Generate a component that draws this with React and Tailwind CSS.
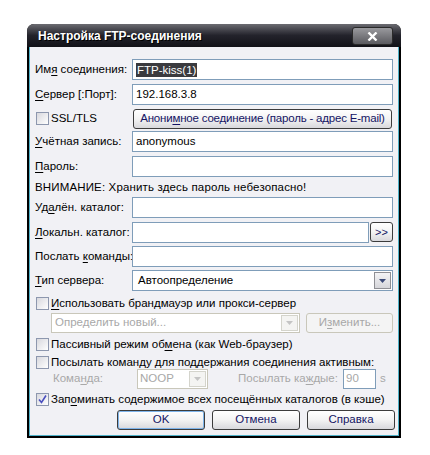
import React from 'react'

// Windows XP-style "FTP connection settings" dialog

const font = { fontFamily: '"Liberation Sans", Arial, sans-serif' }

function U({ children }) {
  return <span className="underline underline-offset-[2px]">{children}</span>
}

function Field({ children, className = '' }) {
  return (
    <div className={`h-[21px] bg-white border border-[#7f9db9] flex items-center px-[3px] ${className}`}>
      {children}
    </div>
  )
}

function Check({ checked = false }) {
  return (
    <div className="w-[13px] h-[13px] shrink-0 border border-[#8d97ae] bg-gradient-to-br from-[#d8d8de] to-white flex items-center justify-center">
      {checked && (
        <svg width="9" height="9" viewBox="0 0 9 9">
          <path d="M1 4.5 L3.5 7.5 L8 0.5" fill="none" stroke="#4a4fbf" strokeWidth="1.6" />
        </svg>
      )}
    </div>
  )
}

function Arrow({ disabled = false }) {
  return (
    <div
      className={`w-[17px] h-full shrink-0 flex items-center justify-center border ${
        disabled ? 'border-[#d4d4cc] bg-[#f4f4f2]' : 'border-[#8f8f94] bg-gradient-to-b from-[#f4f4f6] to-[#d6d6da]'
      }`}
    >
      <svg width="7" height="4" viewBox="0 0 7 4">
        <path d="M0 0 H7 L3.5 4 Z" fill={disabled ? '#c4c4c4' : '#3b4a78'} />
      </svg>
    </div>
  )
}

function Button({ children, className = '', def = false, disabled = false }) {
  return (
    <div
      className={`h-[20px] rounded-[3px] border flex items-center justify-center whitespace-nowrap ${
        disabled
          ? 'border-[#c9c7ba] text-[#a7a7a7] bg-[#f4f4f4]'
          : 'border-[#3c3c3c] text-[#141464] bg-gradient-to-b from-white via-[#f3f3f3] to-[#d8d8dc]'
      } ${def ? 'shadow-[inset_0_0_0_1px_#7fb4ea]' : ''} ${className}`}
    >
      {children}
    </div>
  )
}

function Row({ label, children, className = '' }) {
  return (
    <div className={`flex items-center h-[21px] ${className}`}>
      <div className="w-[97px] shrink-0 leading-none whitespace-nowrap">{label}</div>
      <div className="flex-1 flex h-full">{children}</div>
    </div>
  )
}

function CheckRow({ checked, children, className = '' }) {
  return (
    <div className={`flex items-center h-[15px] pl-[1px] gap-[2px] whitespace-nowrap ${className}`}>
      <Check checked={checked} />
      <span className="leading-none">{children}</span>
    </div>
  )
}

export default function App() {
  return (
    <div className="w-[430px] h-[455px] bg-white pt-[24px] pl-[27px] text-[11.5px] text-black" style={font}>
      <div className="w-[374px] h-[414px] bg-black rounded-t-[7px] px-[2px] pb-[2px] flex flex-col">
        {/* title bar */}
        <div className="h-[23px] -mx-[2px] rounded-t-[7px] bg-gradient-to-b from-[#6c6c72] via-[#23232b] to-[#121218] flex items-center justify-between pl-[11px] pr-[8px] pt-[1px]">
          <span className="text-white font-bold text-[12px] [text-shadow:1px_1px_0_#000]">Настройка FTP-соединения</span>
          <div className="w-[41px] h-[18px] rounded-[3px] border border-[#2a2a2a] bg-gradient-to-b from-[#9a9a9e] to-[#5b5b60] flex items-center justify-center">
            <svg width="11" height="9" viewBox="0 0 11 9">
              <path d="M1.5 0.5 L9.5 8.5 M9.5 0.5 L1.5 8.5" stroke="white" strokeWidth="2.4" />
            </svg>
          </div>
        </div>

        {/* client area */}
        <div className="flex-1 bg-[#f1f1f5] border-x border-b border-[#4fb2c9] pl-[5px] pr-[5px] pt-[12px] flex flex-col">
          <Row label={<>Им<U>я</U> соединения:</>}>
            <Field className="flex-1">
              <span className="bg-[#3a3a3e] text-white px-[1px] leading-[14px]">FTP-kiss(1)</span>
            </Field>
          </Row>
          <Row className="mt-[4px]" label={<><U>С</U>ервер [:Порт]:</>}>
            <Field className="flex-1">192.168.3.8</Field>
          </Row>
          <div className="flex items-center h-[21px] mt-[3px]">
            <div className="w-[98px] shrink-0">
              <CheckRow>SSL/TLS</CheckRow>
            </div>
            <Button className="flex-1 mr-[1px] tracking-[-0.2px]">
              Анони<U>м</U>ное соединение (пароль - адрес E-mail)
            </Button>
          </div>
          <Row className="mt-[2px]" label={<><U>У</U>чётная запись:</>}>
            <Field className="flex-1">anonymous</Field>
          </Row>
          <Row className="mt-[4px]" label={<><U>П</U>ароль:</>}>
            <Field className="flex-1" />
          </Row>
          <div className="h-[14px] mt-[4px] flex items-center leading-none tracking-[0.15px]">
            ВНИМАНИЕ: Хранить здесь пароль небезопасно!
          </div>
          <Row className="mt-[2px]" label={<>Уд<U>а</U>лён. каталог:</>}>
            <Field className="flex-1" />
          </Row>
          <Row className="mt-[4px]" label={<><U>Л</U>окальн. каталог:</>}>
            <Field className="flex-1" />
            <Button className="w-[23px] ml-[1px] text-[11px]">&gt;&gt;</Button>
          </Row>
          <Row className="mt-[3px]" label={<>Послать <U>к</U>оманды:</>}>
            <Field className="flex-1" />
          </Row>
          <Row className="mt-[3px]" label={<><U>Т</U>ип сервера:</>}>
            <div className="flex-1 h-full bg-white border border-[#7f9db9] flex items-center pl-[5px] p-[1px]">
              <span className="flex-1">Автоопределение</span>
              <Arrow />
            </div>
          </Row>
          <CheckRow className="mt-[5px]">
            <U>И</U>спользовать брандмауэр или прокси-сервер
          </CheckRow>
          <div className="flex items-center h-[20px] mt-[2px] pl-[16px]">
            <div className="w-[249px] h-full bg-white border border-[#c9c7ba] flex items-center text-[#a8a8a8] pl-[3px] p-[1px]">
              <span className="flex-1">Определить новый...</span>
              <Arrow disabled />
            </div>
            <Button disabled className="w-[87px] ml-[6px]">
              И<U>з</U>менить...
            </Button>
          </div>
          <CheckRow className="mt-[4px]">
            Пассивный режим об<U>м</U>ена (как Web-браузер)
          </CheckRow>
          <CheckRow className="mt-[3px]">
            Посылать команду для поддержания соединения активным:
          </CheckRow>
          <div className="flex items-center h-[20px] -mt-[1px] text-[#a8a8a8] whitespace-nowrap">
            <span className="w-[102px] pl-[18px] shrink-0">Кома<U>н</U>да:</span>
            <div className="w-[71px] h-full bg-white border border-[#c9c7ba] flex items-center pl-[2px] p-[1px]">
              <span className="flex-1">NOOP</span>
              <Arrow disabled />
            </div>
            <span className="ml-[30px] w-[105px]">Посылать ка<U>ж</U>дые:</span>
            <div className="w-[33px] h-full bg-white border border-[#7f9db9] flex items-center px-[2px]">90</div>
            <span className="ml-[4px]">s</span>
          </div>
          <CheckRow checked className="mt-[3px]">
            Зап<U>о</U>минать содержимое всех посещённых каталогов (в кэше)
          </CheckRow>
          <div className="flex justify-end gap-[7px] mt-[3px] mr-[-2px]">
            <Button def className="w-[88px]">OK</Button>
            <Button className="w-[88px]">Отмена</Button>
            <Button className="w-[88px]">Справка</Button>
          </div>
        </div>
      </div>
    </div>
  )
}
